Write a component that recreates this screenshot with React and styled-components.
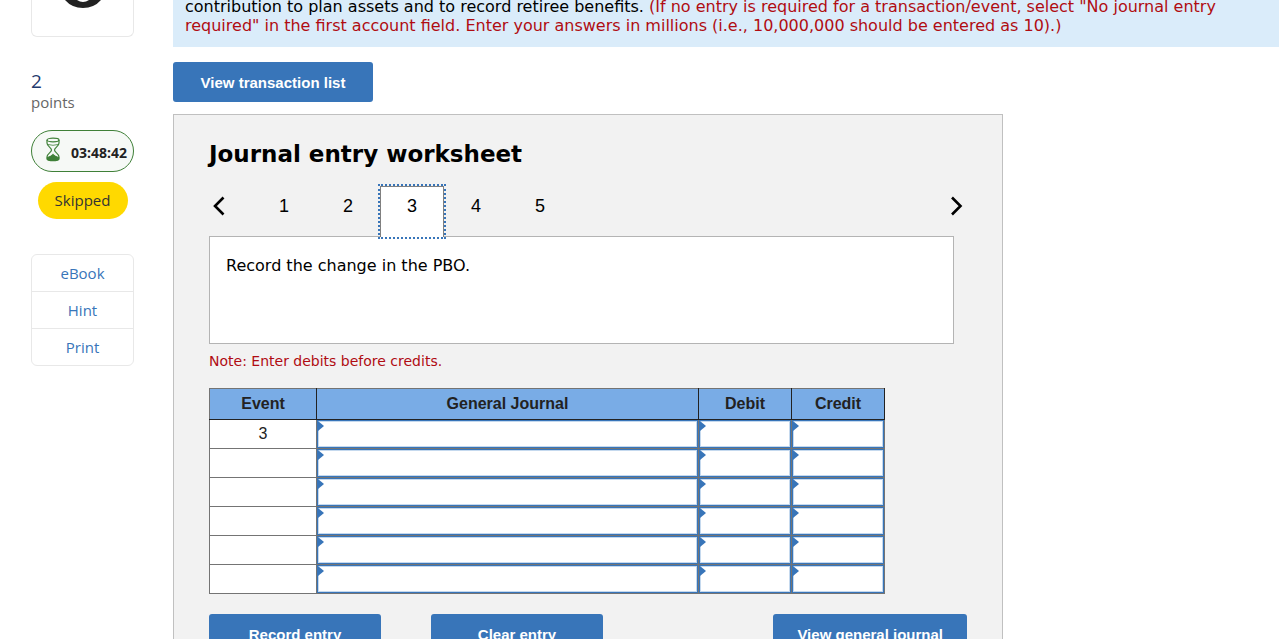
import React, { useState } from "react";
import styled, { createGlobalStyle } from "styled-components";

const GlobalStyle = createGlobalStyle`
  * {
    box-sizing: border-box;
  }

  body {
    margin: 0;
    background: #ffffff;
    color: #000000;
    font-family: Verdana, "DejaVu Sans", sans-serif;
    font-size: 16px;
  }
`;

const Page = styled.div`
  display: flex;
  height: 100vh;
  overflow: hidden;
`;

const Sidebar = styled.aside`
  display: flex;
  flex-direction: column;
  flex-shrink: 0;
  width: 173px;
  padding: 0 39px 0 31px;
  font-family: "Open Sans", sans-serif;
  font-size: 15px;
`;

const QuestionCard = styled.div`
  display: flex;
  align-items: flex-end;
  justify-content: center;
  height: 37px;
  padding-bottom: 28px;
  border: 1px solid #e8e8e8;
  border-top: 0;
  border-radius: 0 0 6px 6px;
  overflow: hidden;
`;

const Points = styled.div`
  margin-top: 33px;
  color: #666666;
  line-height: 20px;
`;

const PointsValue = styled.div`
  color: #1f3a6e;
  font-size: 19px;
  line-height: 22px;
`;

const Timer = styled.div`
  display: flex;
  align-items: center;
  justify-content: space-between;
  height: 42px;
  margin-top: 18px;
  padding: 0 6px 0 13px;
  border: 1px solid #3f8038;
  border-radius: 21px;
  background: #f6f9f6;
`;

const TimerText = styled.span`
  padding-top: 4px;
  color: #222222;
  font-size: 14px;
  font-weight: 700;
  line-height: 18px;
`;

const Status = styled.div`
  align-self: center;
  width: 90px;
  margin-top: 10px;
  border-radius: 19px;
  background: #ffd900;
  color: #333333;
  line-height: 37px;
  text-align: center;
`;

const ToolList = styled.nav`
  margin-top: 35px;
  border: 1px solid #e8e8e8;
  border-radius: 6px;
`;

const ToolLink = styled.a`
  display: block;
  color: #3875b9;
  line-height: 36px;
  text-align: center;
  text-decoration: none;

  & + & {
    border-top: 1px solid #e8e8e8;
  }
`;

const Main = styled.main`
  flex: 1;
  min-width: 0;
`;

const Instructions = styled.div`
  display: flex;
  align-items: flex-end;
  height: 47px;
  padding: 0 12px 12px;
  background: #daecfa;
  line-height: 19px;
  overflow: hidden;

  p {
    margin: 0;
  }
`;

const Warning = styled.span`
  color: #b00c12;
`;

const Button = styled.button`
  height: 40px;
  padding: 0 24px;
  border: 0;
  border-radius: 3px;
  background: #3875b9;
  color: #ffffff;
  font-family: Arial, "Liberation Sans", sans-serif;
  font-size: 15px;
  font-weight: 700;
  cursor: pointer;
`;

const ListButton = styled(Button)`
  display: block;
  min-width: 200px;
  margin: 15px 0 12px;
`;

const Worksheet = styled.section`
  max-width: 830px;
  padding: 25px 35px 36px;
  border: 1px solid #c0c0c0;
  background: #f2f2f2;
`;

const Title = styled.h1`
  margin: 0;
  font-size: 23px;
  font-weight: 700;
  line-height: 28px;
`;

const TabBar = styled.div`
  display: flex;
  margin: 18px 0 -1px;
`;

const Arrow = styled.button`
  display: flex;
  align-items: center;
  padding: 0 3px 12px;
  border: 0;
  background: none;
  cursor: pointer;
`;

const Tabs = styled.div`
  display: flex;
  flex: 1;
  padding-left: 23px;
`;

const Tab = styled.button`
  position: relative;
  width: 64px;
  height: 51px;
  padding: 0 0 12px;
  border: 1px solid ${({ $active }) => ($active ? "#808080" : "transparent")};
  border-bottom: 0;
  background: ${({ $active }) => ($active ? "#ffffff" : "transparent")};
  outline: ${({ $active }) => ($active ? "2px dotted #3875b9" : "none")};
  color: #000000;
  font-family: Arial, "Liberation Sans", sans-serif;
  font-size: 18px;
  cursor: pointer;
`;

const EntryBox = styled.div`
  max-width: 745px;
  height: 108px;
  padding: 19px 16px;
  border: 1px solid #b4b4b4;
  background: #ffffff;
  line-height: 20px;
`;

const Note = styled.p`
  margin: 7px 0 17px;
  color: #b00c12;
  font-size: 14px;
  line-height: 20px;
`;

const JournalTable = styled.table`
  width: 100%;
  max-width: 676px;
  border-collapse: collapse;
  table-layout: fixed;
  background: #ffffff;
  font-family: Arial, "Liberation Sans", sans-serif;
  font-size: 16px;
`;

const HeadCell = styled.th`
  width: ${({ $width }) => $width || "auto"};
  height: 31px;
  padding: 0;
  border: 1px solid #222222;
  border-top-color: #747474;
  background: #79ace6;
  color: #222222;

  &:first-child {
    border-left-color: #747474;
  }
`;

const Cell = styled.td`
  height: 29px;
  padding: 0;
  border: 1px solid #747474;
  color: #222222;
  text-align: center;
`;

const EntryField = styled.div`
  position: relative;

  &::before {
    content: "";
    position: absolute;
    top: 1px;
    left: 1px;
    border: solid transparent;
    border-width: 5px 0 5px 6px;
    border-left-color: #3875b9;
  }
`;

const EntryInput = styled.input`
  display: block;
  width: 100%;
  height: 28px;
  padding: 0 8px;
  border: 1px solid #3875b9;
  border-radius: 0;
  outline: none;
  box-shadow: inset 0 0 0 1px #c5d9ee;
  font: inherit;
`;

const Actions = styled.div`
  display: flex;
  gap: 50px;
  margin-top: 20px;
`;

const Action = styled(Button)`
  min-width: 172px;
`;

const JournalButton = styled(Button)`
  margin-left: auto;
`;

const Hourglass = () => (
  <svg width="16" height="28" viewBox="0 0 16 28" fill="none" stroke="#3f8038" strokeWidth="1.2">
    <ellipse cx="8" cy="3" rx="6" ry="1.8" />
    <path d="M2 3v3c0 3.500 4.500 4.500 4.500 7S2 16.500 2 20v2c1 2.200 11 2.200 12 0v-2c0-3.500-4.500-4.500-4.500-7S14 9.500 14 6V3" />
    <path d="M3 7.500q5 1.600 10 0" strokeWidth="0.8" />
    <path d="M2.500 20.500Q6.500 19.500 8 17.500q1.500 2 5.500 3V22c-1.500 1.800-9.500 1.800-11 0z" fill="#3f8038" />
  </svg>
);

const Chevron = ({ right }) => (
  <svg width="14" height="20" viewBox="0 0 14 20" fill="none" stroke="#000000" strokeWidth="2.6">
    <path d={right ? "M2 1.500L10.500 10L2 18.500" : "M11.500 1.500L3 10L11.500 18.500"} />
  </svg>
);

const tabs = [1, 2, 3, 4, 5];
const rows = [3, "", "", "", "", ""];
const columns = ["General Journal", "Debit", "Credit"];

const App = () => {
  const [active, setActive] = useState(3);

  return (
    <Page>
      <GlobalStyle />
      <Sidebar>
        <QuestionCard>
          <svg width="36" height="8" viewBox="0 0 36 8">
            <path d="M0 0Q7 8 18 8T36 0H24Q18 4 12 0z" fill="#222222" />
          </svg>
        </QuestionCard>
        <Points>
          <PointsValue>2</PointsValue>
          points
        </Points>
        <Timer>
          <Hourglass />
          <TimerText>03:48:42</TimerText>
        </Timer>
        <Status>Skipped</Status>
        <ToolList>
          <ToolLink href="#ebook">eBook</ToolLink>
          <ToolLink href="#hint">Hint</ToolLink>
          <ToolLink href="#print">Print</ToolLink>
        </ToolList>
      </Sidebar>
      <Main>
        <Instructions>
          <p>
            contribution to plan assets and to record retiree benefits.{" "}
            <Warning>
              (If no entry is required for a transaction/event, select "No journal entry
              required" in the first account field. Enter your answers in millions (i.e.,
              10,000,000 should be entered as 10).)
            </Warning>
          </p>
        </Instructions>
        <ListButton>View transaction list</ListButton>
        <Worksheet>
          <Title>Journal entry worksheet</Title>
          <TabBar>
            <Arrow aria-label="Previous entry">
              <Chevron />
            </Arrow>
            <Tabs>
              {tabs.map((tab) => (
                <Tab key={tab} $active={tab === active} onClick={() => setActive(tab)}>
                  {tab}
                </Tab>
              ))}
            </Tabs>
            <Arrow aria-label="Next entry">
              <Chevron right />
            </Arrow>
          </TabBar>
          <EntryBox>Record the change in the PBO.</EntryBox>
          <Note>Note: Enter debits before credits.</Note>
          <JournalTable>
            <thead>
              <tr>
                <HeadCell $width="107px">Event</HeadCell>
                <HeadCell>General Journal</HeadCell>
                <HeadCell $width="93px">Debit</HeadCell>
                <HeadCell $width="93px">Credit</HeadCell>
              </tr>
            </thead>
            <tbody>
              {rows.map((event, index) => (
                <tr key={index}>
                  <Cell>{event}</Cell>
                  {columns.map((column) => (
                    <Cell key={column}>
                      <EntryField>
                        <EntryInput aria-label={`${column}, row ${index + 1}`} />
                      </EntryField>
                    </Cell>
                  ))}
                </tr>
              ))}
            </tbody>
          </JournalTable>
          <Actions>
            <Action>Record entry</Action>
            <Action>Clear entry</Action>
            <JournalButton>View general journal</JournalButton>
          </Actions>
        </Worksheet>
      </Main>
    </Page>
  );
};

export default App;
